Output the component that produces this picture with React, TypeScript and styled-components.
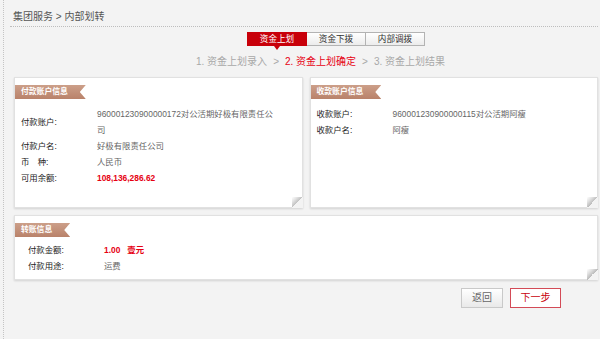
import { FC } from 'react';
import styled, { createGlobalStyle } from 'styled-components';

type InfoRow = {
  label: string;
  value: string;
  isAmount?: boolean;
  unit?: string;
};

const payerRows: InfoRow[] = [
  { label: '付款账户:', value: '960001230900000172对公活期好极有限责任公司' },
  { label: '付款户名:', value: '好极有限责任公司' },
  { label: '币\u3000种:', value: '人民币' },
  { label: '可用余额:', value: '108,136,286.62', isAmount: true },
];

const payeeRows: InfoRow[] = [
  { label: '收款账户:', value: '960001230900000115对公活期阿瘦' },
  { label: '收款户名:', value: '阿瘦' },
];

const transferRows: InfoRow[] = [
  { label: '付款金额:', value: '1.00', isAmount: true, unit: '壹元' },
  { label: '付款用途:', value: '运费' },
];

const tabs = ['资金上划', '资金下拨', '内部调拨'];
const steps = ['1. 资金上划录入', '2. 资金上划确定', '3. 资金上划结果'];

type InfoListProps = {
  rows: InfoRow[];
  indent: number;
  gap: number;
};

const InfoList: FC<InfoListProps> = ({ rows, indent, gap }) => (
  <List $indent={indent} $gap={gap}>
    {rows.map((row) => (
      <Row key={row.label}>
        <Label>{row.label}</Label>
        <Value $isAmount={row.isAmount}>
          {row.value}
          {row.unit && <Unit>{row.unit}</Unit>}
        </Value>
      </Row>
    ))}
  </List>
);

const App: FC = () => {
  return (
    <>
      <GlobalStyle />
      <Page>
        <Breadcrumb>集团服务 &gt; 内部划转</Breadcrumb>
        <Main>
          <Tabs>
            {tabs.map((tab, i) => (
              <Tab key={tab} $active={i === 0}>
                {tab}
              </Tab>
            ))}
          </Tabs>
          <Steps>
            {steps.map((step, i) => (
              <StepItem key={step}>
                {i > 0 && <StepSep>&gt;</StepSep>}
                <Step $current={i === 1}>{step}</Step>
              </StepItem>
            ))}
          </Steps>
          <CardGrid>
            <Card $height={131}>
              <Ribbon>付款账户信息</Ribbon>
              <InfoList rows={payerRows} indent={6} gap={7} />
              <Fold />
            </Card>
            <Card $height={131}>
              <Ribbon>收款账户信息</Ribbon>
              <InfoList rows={payeeRows} indent={6} gap={7} />
              <Fold />
            </Card>
          </CardGrid>
          <TransferCard $height={65}>
            <Ribbon>转账信息</Ribbon>
            <InfoList rows={transferRows} indent={13} gap={5} />
            <Fold />
          </TransferCard>
          <Actions>
            <BackButton type="button">返回</BackButton>
            <NextButton type="button">下一步</NextButton>
          </Actions>
        </Main>
      </Page>
    </>
  );
};

export default App;

const GlobalStyle = createGlobalStyle`
  html, body {
    margin: 0;
    padding: 0;
    background: #f3f3f3;
  }
  body {
    font-family: "Liberation Sans", "Noto Sans CJK SC", sans-serif;
    color: #333;
  }
`;

const Page = styled.div`
  min-height: 339px;
  box-sizing: border-box;
  margin-left: 3px;
  padding-right: 2px;
  border-left: 1px dotted #c4c4c4;
`;

const Breadcrumb = styled.div`
  margin-left: 6px;
  padding: 10px 0 2px 3px;
  font-size: 10px;
  line-height: 14px;
  color: #555;
  border-bottom: 1px dotted #bdbdbd;
`;

const Main = styled.div`
  padding-left: 10px;
`;

const Tabs = styled.div`
  display: flex;
  margin: 5px 0 0 233px;
`;

const Tab = styled.div<{ $active?: boolean }>`
  position: relative;
  width: 60px;
  height: 14px;
  box-sizing: border-box;
  margin-right: -1px;
  border: 1px solid ${({ $active }) => ($active ? '#c8000a' : '#b3b3b3')};
  background: ${({ $active }) => ($active ? '#c8000a' : 'linear-gradient(#ffffff, #ececec)')};
  color: ${({ $active }) => ($active ? '#fff' : '#333')};
  font-size: 8.6px;
  line-height: 12px;
  text-align: center;
  ${({ $active }) =>
    $active &&
    `
    z-index: 1;
    &::after {
      content: '';
      position: absolute;
      left: 50%;
      bottom: -5px;
      margin-left: -3px;
      border-left: 3px solid transparent;
      border-right: 3px solid transparent;
      border-top: 4px solid #c8000a;
    }
  `}
`;

const Steps = styled.div`
  display: flex;
  align-items: center;
  margin: 9px 0 0 182px;
  font-size: 10px;
  line-height: 14px;
  color: #a8a8a8;
`;

const StepItem = styled.div`
  display: flex;
  align-items: center;
`;

const StepSep = styled.span`
  margin: 0 6px;
`;

const Step = styled.span<{ $current?: boolean }>`
  color: ${({ $current }) => ($current ? '#e60012' : '#a8a8a8')};
`;

const CardGrid = styled.div`
  display: grid;
  grid-template-columns: 1fr 1fr;
  gap: 7px;
  margin-top: 8px;
`;

const Card = styled.div<{ $height: number }>`
  position: relative;
  height: ${({ $height }) => $height}px;
  box-sizing: border-box;
  padding-top: 7px;
  background: #fff;
  border: 1px solid #e1e1e1;
  box-shadow: 0 1px 2px rgba(0, 0, 0, 0.14);
`;

const TransferCard = styled(Card)`
  margin-top: 7px;
`;

const Fold = styled.div`
  position: absolute;
  right: -1px;
  bottom: -1px;
  width: 11px;
  height: 11px;
  background: linear-gradient(315deg, #f3f3f3 50%, #bdbdbd 50%, #e2e2e2 75%, #ffffff 100%);
`;

const Ribbon = styled.div`
  width: fit-content;
  height: 14px;
  padding: 0 18px 0 6px;
  background: linear-gradient(#cc9f89, #b9826a);
  color: #fff;
  font-size: 7.8px;
  font-weight: bold;
  line-height: 14px;
  clip-path: polygon(0 0, 100% 0, calc(100% - 6px) 50%, 100% 100%, 0 100%);
`;

const List = styled.div<{ $indent: number; $gap: number }>`
  margin-top: ${({ $gap }) => $gap}px;
  padding-left: ${({ $indent }) => $indent}px;
  font-size: 8.4px;
  line-height: 16px;
`;

const Row = styled.div`
  display: grid;
  grid-template-columns: 76px 180px;
  align-items: center;
`;

const Label = styled.span`
  color: #222;
`;

const Value = styled.span<{ $isAmount?: boolean }>`
  color: ${({ $isAmount }) => ($isAmount ? '#e60012' : '#666')};
  font-weight: ${({ $isAmount }) => ($isAmount ? 'bold' : 'normal')};
`;

const Unit = styled.span`
  margin-left: 7px;
`;

const Actions = styled.div`
  display: flex;
  justify-content: flex-end;
  gap: 7px;
  margin-top: 8px;
  padding-right: 37px;
`;

const BaseButton = styled.button`
  height: 20px;
  box-sizing: border-box;
  padding: 0;
  font-family: inherit;
  font-size: 10px;
  line-height: 18px;
  cursor: pointer;
`;

const BackButton = styled(BaseButton)`
  width: 42px;
  border: 1px solid #c9c9c9;
  background: linear-gradient(#ffffff, #e9e9e9);
  color: #666;
`;

const NextButton = styled(BaseButton)`
  width: 51px;
  border: 1px solid #d34b57;
  background: #fff;
  color: #c8000a;
`;
